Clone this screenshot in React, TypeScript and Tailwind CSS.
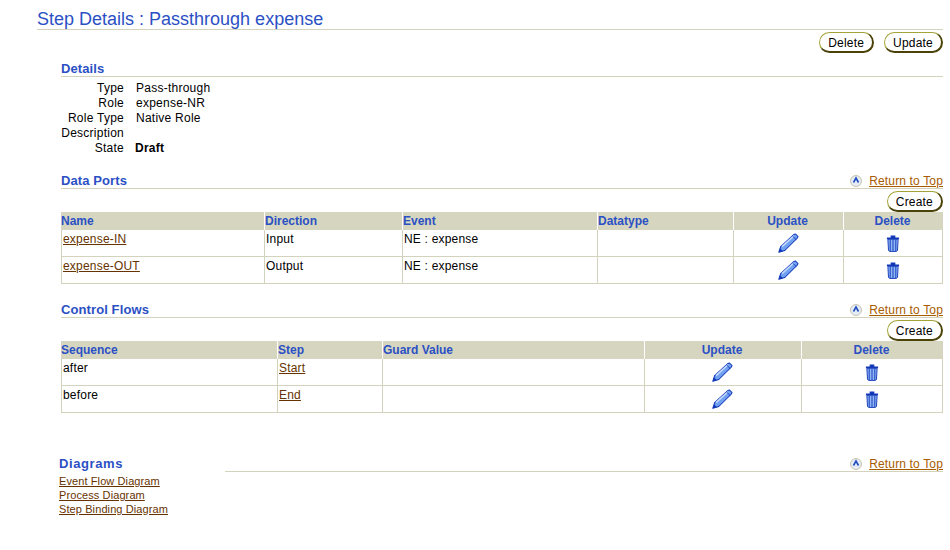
const font = { fontFamily: '"Liberation Sans", Arial, sans-serif' };

function Pencil() {
  return (
    <svg width="22" height="21" viewBox="0 0 24 24" preserveAspectRatio="none" className="block -translate-x-[1px]">
      <path d="M2 22 L4 15.5 L18 2 L20 1 L23 4 L22 6 L8.5 20 Z" fill="#6fa0f2" stroke="#1238b8" strokeWidth="1.1" strokeLinejoin="round" />
      <path d="M5.5 15.5 L18.5 3.2" stroke="#c4dafc" strokeWidth="1.8" />
      <path d="M17 3.5 L21 7.5" stroke="#1238b8" strokeWidth="1" />
      <path d="M2 22 L3.2 17.5 L6.5 20.8 Z" fill="#1238b8" />
    </svg>
  );
}

function Trash() {
  return (
    <svg width="14" height="17" viewBox="0 0 15 18" className="block">
      <path d="M5 1.5 H10 M1 3.5 H14" stroke="#1238b8" strokeWidth="2" />
      <path d="M2 4.5 H13 L12.3 16.5 L11 17.5 H4 L2.7 16.5 Z" fill="#8fb6f5" stroke="#1238b8" />
      <path d="M4.5 5 V17 M7.5 5 V17 M10.5 5 V17" stroke="#1238b8" strokeWidth="1" />
    </svg>
  );
}

function TopIcon() {
  return (
    <svg width="12" height="12" viewBox="0 0 12 12" className="block">
      <circle cx="6" cy="6" r="5.5" fill="#e6ecf6" stroke="#c6c6b0" />
      <path d="M3.5 7.5 L6 3 L8.5 7.5" fill="none" stroke="#2450c0" strokeWidth="1.6" />
    </svg>
  );
}

function Btn({ children }: { children: string }) {
  return (
    <span className="inline-flex h-[21px] items-center rounded-full border border-t-[#a3a33a] border-r-2 border-b-2 border-l-[#a3a33a] border-r-[#4a4208] border-b-[#4a4208] bg-white px-[8px] pt-[1px] text-[12px] tracking-[0.2px] text-black">
      {children}
    </span>
  );
}

function ReturnTop() {
  return (
    <span className="flex translate-y-[2px] items-center gap-[7px] text-[12px] tracking-[0.15px] text-[#a85c00]">
      <TopIcon />
      <span className="underline">Return to Top</span>
    </span>
  );
}

function SectionHead({ title, top = true }: { title: string; top?: boolean }) {
  return (
    <div className="flex h-[17px] items-end justify-between border-b border-[#d3d3bd]">
      <span className="text-[13px] leading-[15px] font-bold tracking-[0.1px] text-[#2b50c4]">{title}</span>
      {top && <ReturnTop />}
    </div>
  );
}

type Col = { label: string; width: number; center?: boolean };

function DataTable({ cols, rows }: { cols: Col[]; rows: { link: number; cells: string[] }[] }) {
  return (
    <table className="w-[882px] table-fixed border-separate border-spacing-0 text-[12px] tracking-[0.2px]">
      <colgroup>
        {cols.map((c) => (
          <col key={c.label} style={{ width: c.width }} />
        ))}
      </colgroup>
      <thead>
        <tr className="h-[18px] bg-[#d6d6c0]">
          {cols.map((c, i) => (
            <th
              key={c.label}
              className={`p-0 pb-[1px] text-[12px] leading-[14px] font-bold tracking-normal text-[#2b50c4] ${c.center ? 'pr-[2px] text-center' : 'text-left'} ${i > 0 ? 'border-l border-white' : ''}`}
            >
              {c.label}
            </th>
          ))}
        </tr>
      </thead>
      <tbody>
        {rows.map((r, ri) => (
          <tr key={ri} className="h-[27px]">
            {r.cells.map((cell, i) => (
              <td key={i} className={`border-b border-l border-[#d3d3bd] pt-[2px] pl-[1px] align-top leading-[14px] ${i === r.link ? 'text-[#663300]' : 'text-black'}`}>
                <span className={i === r.link ? 'underline' : ''}>{cell}</span>
              </td>
            ))}
            <td className="border-b border-l border-[#d3d3bd] p-0 align-middle"><div className="flex justify-center"><Pencil /></div></td>
            <td className="border-r border-b border-l border-[#d3d3bd] p-0 align-middle"><div className="flex justify-center"><Trash /></div></td>
          </tr>
        ))}
      </tbody>
    </table>
  );
}

const DETAILS: [string, string, boolean?][] = [
  ['Type', 'Pass-through'],
  ['Role', 'expense-NR'],
  ['Role Type', 'Native Role'],
  ['Description', ''],
  ['State', 'Draft', true],
];

export default function App() {
  return (
    <div style={font} className="h-[550px] w-[950px] overflow-hidden bg-white">
      <div className="ml-[37px] w-[906px] pt-[10px]">
        <h1 className="h-[20px] border-b border-[#d3d3bd] text-[18px] leading-[19px] text-[#2b50c4]">Step Details : Passthrough expense</h1>
        <div className="mt-[2px] flex justify-end gap-[10px]">
          <Btn>Delete</Btn>
          <Btn>Update</Btn>
        </div>
      </div>

      <div className="ml-[61px] w-[882px]">
        <div className="mt-[7px]"><SectionHead title="Details" top={false} /></div>
        <div className="mt-[4px] grid grid-cols-[63px_1fr] gap-x-[12px] text-[12px] leading-[15px] tracking-[0.25px] text-black">
          {DETAILS.map(([k, v, b]) => (
            <div key={k} className="contents">
              <span className="text-right">{k}</span>
              <span className={b ? '-ml-[1px] font-bold' : ''}>{v}</span>
            </div>
          ))}
        </div>

        <div className="mt-[16px]"><SectionHead title="Data Ports" /></div>
        <div className="mt-[2px] flex justify-end"><Btn>Create</Btn></div>
        <DataTable
          cols={[
            { label: 'Name', width: 203 },
            { label: 'Direction', width: 138 },
            { label: 'Event', width: 195 },
            { label: 'Datatype', width: 136 },
            { label: 'Update', width: 110, center: true },
            { label: 'Delete', width: 100, center: true },
          ]}
          rows={[
            { link: 0, cells: ['expense-IN', 'Input', 'NE : expense', ''] },
            { link: 0, cells: ['expense-OUT', 'Output', 'NE : expense', ''] },
          ]}
        />

        <div className="mt-[17px]"><SectionHead title="Control Flows" /></div>
        <div className="mt-[2px] flex justify-end"><Btn>Create</Btn></div>
        <DataTable
          cols={[
            { label: 'Sequence', width: 216 },
            { label: 'Step', width: 105 },
            { label: 'Guard Value', width: 262 },
            { label: 'Update', width: 157, center: true },
            { label: 'Delete', width: 142, center: true },
          ]}
          rows={[
            { link: 1, cells: ['after', 'Start', ''] },
            { link: 1, cells: ['before', 'End', ''] },
          ]}
        />
      </div>

      <div className="mt-[42px] ml-[59px] flex w-[884px] items-end">
        <span className="w-[166px] -translate-y-[1px] text-[13px] leading-[15px] font-bold tracking-[0.6px] text-[#2b50c4]">Diagrams</span>
        <div className="flex h-[17px] flex-1 items-end justify-end border-b border-[#d3d3bd]">
          <ReturnTop />
        </div>
      </div>
      <div className="mt-[2px] ml-[59px] flex flex-col items-start text-[11px] leading-[14px] tracking-[0.1px] text-[#663300] underline">
        <span>Event Flow Diagram</span>
        <span>Process Diagram</span>
        <span>Step Binding Diagram</span>
      </div>
    </div>
  );
}
